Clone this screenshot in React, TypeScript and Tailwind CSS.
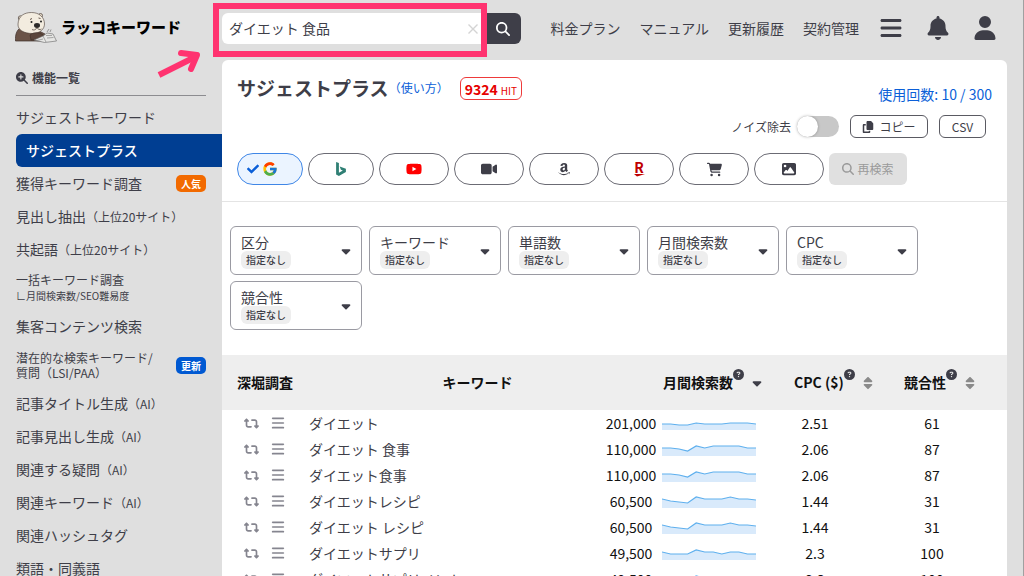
import React from "react";
import { Menu } from "lucide-react";
import { FaCheck } from "react-icons/fa";
import { FcGoogle } from "react-icons/fc";
import {
  FaAmazon,
  FaBars,
  FaBell,
  FaCaretDown,
  FaCartShopping,
  FaCircleQuestion,
  FaCopy,
  FaImage,
  FaMagnifyingGlass,
  FaMagnifyingGlassPlus,
  FaRetweet,
  FaSort,
  FaUser,
  FaVideo,
  FaYoutube,
} from "react-icons/fa6";

interface NavItem {
  label: string;
  /** 補足（小さい文字で横に表示） */
  note?: string;
  /** 2行目 */
  second?: string;
  /** 2行目を説明文として小さく表示 */
  secondSmall?: boolean;
  badge?: "人気" | "更新";
  active?: boolean;
}

const NAV_ITEMS: NavItem[] = [
  { label: "サジェストキーワード" },
  { label: "サジェストプラス", active: true },
  { label: "獲得キーワード調査", badge: "人気" },
  { label: "見出し抽出", note: "（上位20サイト）" },
  { label: "共起語", note: "（上位20サイト）" },
  { label: "一括キーワード調査", second: "∟月間検索数/SEO難易度", secondSmall: true },
  { label: "集客コンテンツ検索" },
  { label: "潜在的な検索キーワード/", second: "質問（LSI/PAA）", badge: "更新" },
  { label: "記事タイトル生成", note: "（AI）" },
  { label: "記事見出し生成", note: "（AI）" },
  { label: "関連する疑問", note: "（AI）" },
  { label: "関連キーワード", note: "（AI）" },
  { label: "関連ハッシュタグ" },
  { label: "類語・同義語" },
];

const HEADER_LINKS = ["料金プラン", "マニュアル", "更新履歴", "契約管理"];

const FILTERS = ["区分", "キーワード", "単語数", "月間検索数", "CPC", "競合性"];

const TREND_A = [6, 6, 5, 5, 7, 6, 6, 6, 7, 7, 7, 6];
const TREND_B = [8, 8, 7, 5, 10, 8, 10, 10, 10, 10, 8, 8];
const TREND_C = [9, 7, 6, 5, 11, 9, 9, 9, 11, 9, 9, 8];
const TREND_D = [8, 6, 6, 6, 10, 8, 8, 6, 8, 8, 6, 6];

const ROWS = [
  { keyword: "ダイエット", volume: "201,000", trend: TREND_A, cpc: "2.51", level: 61 },
  { keyword: "ダイエット 食事", volume: "110,000", trend: TREND_B, cpc: "2.06", level: 87 },
  { keyword: "ダイエット食事", volume: "110,000", trend: TREND_B, cpc: "2.06", level: 87 },
  { keyword: "ダイエットレシピ", volume: "60,500", trend: TREND_C, cpc: "1.44", level: 31 },
  { keyword: "ダイエット レシピ", volume: "60,500", trend: TREND_C, cpc: "1.44", level: 31 },
  { keyword: "ダイエットサプリ", volume: "49,500", trend: TREND_D, cpc: "2.3", level: 100 },
  { keyword: "ダイエットサプリメント", volume: "49,500", trend: TREND_D, cpc: "2.3", level: 100 },
];

function OtterLogo() {
  return (
    <svg width="42" height="32" viewBox="0 0 42 32" aria-hidden="true">
      <path d="M0.5 30C0 23 2 18 7 16l13 2 10 5-2 7z" fill="#6b5347" stroke="#3d2f29" strokeWidth="0.7" />
      <circle cx="5.5" cy="7" r="2.2" fill="#e9dfcf" stroke="#4a3d36" strokeWidth="0.7" />
      <circle cx="25.5" cy="4.5" r="2" fill="#e9dfcf" stroke="#4a3d36" strokeWidth="0.7" />
      <path
        d="M3 13C3.500 5 9 1.500 16.500 1.500S29.500 6 29.500 13c0 5-4.500 9.500-12 9.500C9 22.500 2.500 19 3 13z"
        fill="#f3ecdf"
        stroke="#4a3d36"
        strokeWidth="0.6"
      />
      <path d="M15 8.500l2-1M23.500 7l2 0.500" stroke="#3d2f29" strokeWidth="0.8" />
      <circle cx="16.500" cy="11" r="1" fill="#222" />
      <circle cx="26" cy="10.500" r="1" fill="#222" />
      <ellipse cx="22" cy="14.500" rx="3" ry="2.400" fill="#2d2a2a" />
      <path d="M22 16.500c-1 2.500-3.500 3-5 2M22 16.500c0.800 2.200 3 2.500 4.500 1.500" fill="none" stroke="#4a3d36" strokeWidth="0.7" />
      <path d="M15 24c3-2.500 7-3 11-1.500l4 3-3 3.500H16z" fill="#5b463c" stroke="#3d2f29" strokeWidth="0.6" />
      <path d="M19 29l9-4 4-3 6 1 3.500 7-12 1.500z" fill="#e6e6e4" stroke="#666" strokeWidth="0.6" />
      <path d="M28 25l3 6M31 24.500l6 0M32 27l6.500-0.500M22 29.500l6-1.500" stroke="#888" strokeWidth="0.7" />
      <path d="M32 21l2-3M35 21l1-2.500" stroke="#777" strokeWidth="0.7" />
    </svg>
  );
}

function BingIcon() {
  return (
    <svg width="14" height="14" viewBox="0 0 24 24" fill="#2f7f74" aria-hidden="true">
      <path d="M3.605 0L8.400 1.686v16.880l6.753-3.895-3.310-1.555-2.090-5.200 10.642 3.739v5.435L8.404 24l-4.800-2.670V0z" />
    </svg>
  );
}

function RakutenIcon() {
  return (
    <span className="flex flex-col items-center text-[#bf0000]">
      <span className="text-[14px] leading-[13px] font-bold">R</span>
      <svg width="11" height="3" viewBox="0 0 11 3" fill="currentColor" aria-hidden="true">
        <path d="M0 0h11L3 2.500z" />
      </svg>
    </span>
  );
}

const SOURCES = [
  { name: "Bing", icon: <BingIcon />, width: "w-[66px]" },
  { name: "YouTube", icon: <FaYoutube size={16} className="text-[#f00]" />, width: "w-[70px]" },
  { name: "動画", icon: <FaVideo size={16} />, width: "w-[70px]" },
  { name: "Amazon", icon: <FaAmazon size={14} />, width: "w-[70px]" },
  { name: "楽天", icon: <RakutenIcon />, width: "w-[70px]" },
  { name: "ショッピング", icon: <FaCartShopping size={15} />, width: "w-[70px]" },
  { name: "画像", icon: <FaImage size={14} />, width: "w-[70px]" },
];

/** 月間検索数の推移（直近12か月） */
function Sparkline({ values }: { values: number[] }) {
  const points = values.map((v, i) => `${(i * 94) / (values.length - 1)},${14 - v}`).join(" ");

  return (
    <svg width="94" height="14" viewBox="0 0 94 14" className="block" aria-hidden="true">
      <polygon points={`0,14 ${points} 94,14`} fill="#d9eafb" />
      <polyline points={points} fill="none" stroke="#5fb0ee" strokeWidth="1.2" />
    </svg>
  );
}

function Header() {
  return (
    <header className="flex h-[60px] shrink-0 items-start pr-[26px]">
      <a href="#" className="flex w-[222px] shrink-0 items-center gap-1 pt-[11px] pl-[15px]">
        <OtterLogo />
        <span className="text-[15px] leading-[32px] font-black text-black">ラッコキーワード</span>
      </a>

      {/* 検索ボックス */}
      <form className="relative mt-[13px] flex h-[31px] w-[299px] shrink-0" onSubmit={(e) => e.preventDefault()}>
        <input
          type="text"
          aria-label="キーワード"
          defaultValue="ダイエット 食品"
          className="min-w-0 flex-1 rounded-l-md bg-white pl-[7px] text-[14px] outline-none"
        />
        <button type="reset" aria-label="クリア" className="flex w-6 items-center justify-center bg-white">
          <svg width="10" height="10" viewBox="0 0 10 10" stroke="#d4d4d4" strokeWidth="1.4" aria-hidden="true">
            <path d="M0.500 0.500l9 9M9.500 0.500l-9 9" />
          </svg>
        </button>
        <button type="submit" aria-label="検索" className="flex w-[36px] items-center justify-center rounded-r-md bg-[#3e3e48] text-white">
          <FaMagnifyingGlass size={14} />
        </button>
        {/* 強調表示の枠と矢印 */}
        <span className="pointer-events-none absolute -top-[10px] right-[34px] -bottom-[13px] -left-[9px] border-6 border-[#ff3370]" />
        <svg
          className="pointer-events-none absolute top-[36px] -left-[65px]"
          width="44"
          height="30"
          viewBox="0 0 44 30"
          fill="none"
          stroke="#ff3370"
          strokeWidth="6"
          aria-hidden="true"
        >
          <path d="M2 26L38 8" />
          <path d="M24 4l16 2L34 20" strokeLinecap="round" strokeLinejoin="round" />
        </svg>
      </form>

      <nav className="ml-auto flex h-[56px] items-center gap-[19px] text-[14px]">
        {HEADER_LINKS.map((label) => (
          <a key={label} href="#" className="whitespace-nowrap">
            {label}
          </a>
        ))}
      </nav>
      <div className="ml-5 flex h-[56px] items-center gap-[23px]">
        <button aria-label="メニュー">
          <FaBars size={24} />
        </button>
        <button aria-label="お知らせ">
          <FaBell size={24} />
        </button>
        <button aria-label="アカウント">
          <FaUser size={24} />
        </button>
      </div>
    </header>
  );
}

function NavLabel({ item }: { item: NavItem }) {
  if (item.second) {
    return (
      <span className="flex flex-col text-[12px] leading-[15px]">
        <span>{item.label}</span>
        <span className={item.secondSmall ? "text-[10px] leading-[18px]" : ""}>{item.second}</span>
      </span>
    );
  }
  return (
    <span className="text-[14px]">
      {item.label}
      {item.note && <span className="text-[12px]">{item.note}</span>}
    </span>
  );
}

function Sidebar() {
  return (
    <aside className="w-[222px] shrink-0 pl-4">
      <h2 className="mr-4 flex h-[36px] items-center gap-1 border-b border-[#8c8c90] text-[12px] font-bold">
        <FaMagnifyingGlassPlus size={12} />
        機能一覧
      </h2>
      <ul className="mt-[5px]">
        {NAV_ITEMS.map((item) => (
          <li key={item.label} className={item.second ? "h-[44px]" : "h-[33px]"}>
            <a
              href="#"
              className={`flex h-full items-center justify-between whitespace-nowrap ${
                item.active ? "rounded-l-md bg-[#003e92] pl-[10px] font-medium text-white" : "pr-4"
              }`}
            >
              <NavLabel item={item} />
              {item.badge && (
                <span
                  className={`rounded-[5px] px-[5px] text-[10px] leading-[17px] font-bold text-white ${
                    item.badge === "人気" ? "bg-[#f26a00]" : "bg-[#0059d2]"
                  }`}
                >
                  {item.badge}
                </span>
              )}
            </a>
          </li>
        ))}
      </ul>
    </aside>
  );
}

function Toolbar() {
  return (
    <section className="border-b border-[#e4e4e4] px-[15px] pt-3 pb-4">
      <div className="flex h-8 items-center">
        <h1 className="text-[19px] font-bold">サジェストプラス</h1>
        <a href="#" className="text-[12px] text-[#0b5fd8]">
          （使い方）
        </a>
        <span className="ml-[11px] flex h-[23px] items-baseline gap-[3px] rounded-md border border-[#ee3a3a] px-1 text-[14px] leading-[22px] font-bold text-[#e60000]">
          9324 <span className="text-[10px] font-normal">HIT</span>
        </span>
        <p className="ml-auto self-end text-[14px] leading-5 text-[#0b5fd8]">使用回数: 10 / 300</p>
      </div>

      <div className="mt-[11px] flex h-[23px] items-center justify-end gap-[11px] pr-[6px] text-[12px]">
        <label className="flex items-center gap-[6px]">
          ノイズ除去
          <input
            type="checkbox"
            className="flex h-[21px] w-[42px] appearance-none items-center rounded-full bg-[#c8c8c8] before:size-[21px] before:rounded-full before:bg-white before:shadow-[0_0_3px_rgba(0,0,0,0.3)] before:content-[''] checked:justify-end checked:bg-[#0b5fd8]"
          />
        </label>
        <button className="flex h-full w-[78px] items-center justify-center gap-[5px] rounded-md border border-[#5a5a62]">
          <FaCopy size={12} />
          コピー
        </button>
        <button className="h-full w-[47px] rounded-md border border-[#5a5a62]">CSV</button>
      </div>

      {/* 取得元 */}
      <div className="mt-[15px] flex gap-[5px]">
        <button
          aria-label="Google"
          aria-pressed="true"
          className="flex h-8 w-[66px] items-center gap-[3px] rounded-full border border-[#3f86e6] bg-[#ebf4ff] pl-[9px] text-[#0b5fd8]"
        >
          <FaCheck size={12} />
          <FcGoogle size={16} />
        </button>
        {SOURCES.map((source) => (
          <button
            key={source.name}
            aria-label={source.name}
            aria-pressed="false"
            className={`flex h-8 items-center justify-center rounded-full border border-[#6b6b74] ${source.width}`}
          >
            {source.icon}
          </button>
        ))}
        <button disabled className="flex h-8 w-[78px] items-center justify-center gap-[3px] rounded-md bg-[#e0e0e0] text-[12px] text-[#9a9a9a]">
          <FaMagnifyingGlass size={12} />
          再検索
        </button>
      </div>
    </section>
  );
}

function Filters() {
  return (
    <section className="flex flex-wrap gap-x-[7px] gap-y-[6px] px-2 pt-6 pb-[25px]">
      {FILTERS.map((name) => (
        <label key={name} className="flex h-[49px] w-[132px] items-center justify-between rounded-md border border-[#9a9aa2] pr-2 pl-[10px]">
          <span className="flex flex-col items-start">
            <span className="text-[14px] leading-[18px]">{name}</span>
            <select className="h-[18px] appearance-none rounded-md bg-[#eee] px-[5px] text-[10px] leading-[18px] font-medium">
              <option>指定なし</option>
            </select>
          </span>
          <FaCaretDown size={14} />
        </label>
      ))}
    </section>
  );
}

function SortHeader({ label, sorted }: { label: string; sorted?: boolean }) {
  return (
    <button className="flex items-center whitespace-nowrap">
      {label}
      <FaCircleQuestion size={11} className="mb-4 text-[#3e3e48]" />
      {sorted ? (
        <FaCaretDown size={14} className="ml-[6px] text-[#3e3e48]" />
      ) : (
        <FaSort size={14} className="ml-[6px] text-[#8a8a8a]" />
      )}
    </button>
  );
}

function ResultTable() {
  return (
    <table className="w-full table-fixed text-[14px]">
      <colgroup>
        <col className="w-[72px]" />
        <col />
        <col className="w-[60px]" />
        <col className="w-[109px]" />
        <col className="w-[110px]" />
        <col className="w-[127px]" />
      </colgroup>
      <thead className="bg-[#eee] text-[#111]">
        <tr className="h-[55px]">
          <th className="pl-[15px] text-left whitespace-nowrap">深堀調査</th>
          <th colSpan={2}>キーワード</th>
          <th className="pl-[2px]">
            <SortHeader label="月間検索数" sorted />
          </th>
          <th className="pl-6">
            <SortHeader label="CPC ($)" />
          </th>
          <th className="pl-6">
            <SortHeader label="競合性" />
          </th>
        </tr>
      </thead>
      <tbody>
        {ROWS.map((row) => (
          <tr key={row.keyword} className="h-[26px]">
            <td className="pl-[22px]">
              <span className="flex items-center gap-[11px] text-[#85858f]">
                <button aria-label="再調査">
                  <FaRetweet size={15} />
                </button>
                <button aria-label="一覧">
                  <Menu size={16} strokeWidth={2.5} />
                </button>
              </span>
            </td>
            <td className="pl-[15px]">{row.keyword}</td>
            <td className="text-center text-[#111]">{row.volume}</td>
            <td className="pl-px">
              <Sparkline values={row.trend} />
            </td>
            <td className="pr-5 text-center text-[#111]">{row.cpc}</td>
            <td className="pr-[23px] text-center text-[#111]">{row.level}</td>
          </tr>
        ))}
      </tbody>
    </table>
  );
}

/** サジェストプラス 検索結果画面 */
export default function App() {
  return (
    <div className="flex h-screen flex-col overflow-hidden border-r border-[#a0a0a0] bg-[#dfdfdf] font-['Noto_Sans_CJK_JP',sans-serif] text-[#3e3e48]">
      <Header />
      <div className="flex min-h-0 flex-1 pr-4">
        <Sidebar />
        <main className="min-w-0 flex-1 overflow-hidden rounded-t-md bg-white">
          <Toolbar />
          <Filters />
          <ResultTable />
        </main>
      </div>
    </div>
  );
}
